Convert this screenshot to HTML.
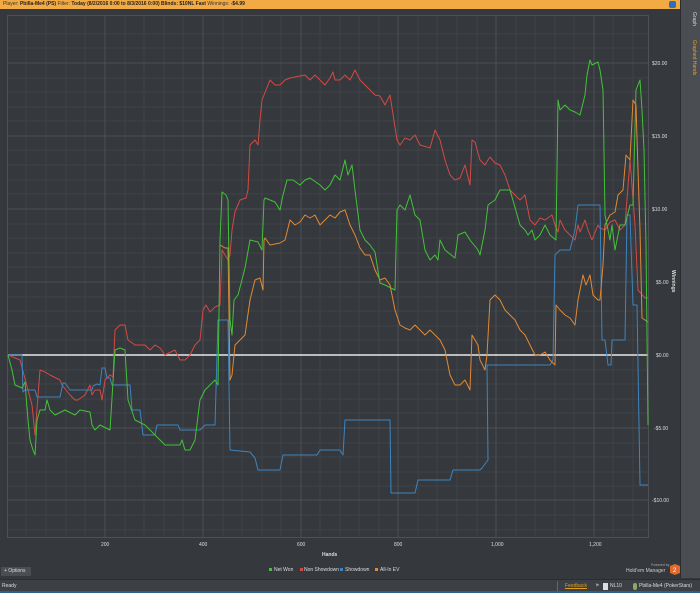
<!DOCTYPE html>
<html><head><meta charset="utf-8"><style>
*{margin:0;padding:0;box-sizing:border-box}
body{width:700px;height:593px;overflow:hidden;background:#35383c;font-family:"Liberation Sans",sans-serif;position:relative}
.top{position:absolute;left:0;top:0;width:680px;height:9px;background:#f2aa45;font-size:5px;line-height:9px;color:#333;padding-left:3px;white-space:nowrap}
.top b{color:#222}
.side{position:absolute;left:680px;top:0;width:20px;height:578px;background:#4a4d51;border-left:1px solid #2a2c2f}
.vt{position:absolute;transform:rotate(90deg);transform-origin:left top;font-size:5px;white-space:nowrap}
.status{position:absolute;left:0;top:579px;width:700px;height:14px;background:#3c3f43;border-top:1px solid #2b2d30;font-size:5px;color:#ddd;line-height:12px}
.opt{position:absolute;left:1px;top:567px;width:30px;height:9px;background:#4a4d51;font-size:5px;color:#ddd;line-height:9px;padding-left:3px}
</style></head><body>
<div class="top">Player: <b>Pbilla-Me4 (PS)</b> Filter: <b>Today (8/2/2016 0:00 to 8/3/2016 0:00) Blinds: $10NL Fast</b> Winnings: <b>-$4.99</b></div>
<div style="position:absolute;left:669px;top:1px;width:7px;height:7px;background:#2a6fc0;border-radius:2px"></div>
<div class="side"><div class="vt" style="left:16px;top:12px;color:#ddd">Graph</div><div class="vt" style="left:16px;top:40px;color:#f0a030">Graphed Hands</div></div>
<svg width="680" height="578" style="position:absolute;left:0;top:9px" viewBox="0 9 680 578">
<g stroke="#41454a" stroke-width="0.6">
<script></script>
</g>
<g id="g"></g>
<rect x="7.5" y="15.5" width="641" height="522" fill="none" stroke="#4d5156" stroke-width="1"/>
<g stroke="#484c51" stroke-width="0.5">
<path d="M26 16V537M46 16V537M66 16V537M85 16V537M125 16V537M144 16V537M164 16V537M183 16V537M223 16V537M242 16V537M262 16V537M281 16V537M320 16V537M340 16V537M359 16V537M379 16V537M418 16V537M437 16V537M457 16V537M477 16V537M516 16V537M535 16V537M555 16V537M574 16V537M613 16V537M633 16V537"/>
<path d="M8 34H648M8 48H648M8 78H648M8 92H648M8 107H648M8 121H648M8 150H648M8 165H648M8 180H648M8 194H648M8 224H648M8 238H648M8 253H648M8 267H648M8 297H648M8 311H648M8 326H648M8 340H648M8 370H648M8 384H648M8 399H648M8 413H648M8 443H648M8 457H648M8 472H648M8 486H648M8 515H648M8 530H648"/>
</g>
<g stroke="#53575c" stroke-width="0.8">
<path d="M105 16V537M203 16V537M301 16V537M398 16V537M496 16V537M594 16V537M8 63H648M8 136H648M8 209H648M8 282H648M8 428H648M8 500H648"/>
</g>
<line x1="8" y1="355" x2="648" y2="355" stroke="#e8e8e8" stroke-width="1.4"/>
<g fill="none" stroke-width="1" stroke-linejoin="round">
<polyline stroke="#d24a45" points="8,355 20,360 28,390 32,405 35,435 40,370 45,372 50,375 60,380 62,385 70,395 75,400 78,400 85,395 90,385 92,395 95,390 100,390 102,400 105,380 110,375 113,377 115,330 120,325 125,325 128,340 135,345 145,345 150,350 155,345 160,348 165,355 175,350 180,360 185,360 190,355 195,345 200,340 203,310 206,305 210,312 215,307 220,305 222,250 225,255 228,260 230,255 232,230 235,212 240,200 246,198 248,190 250,145 255,140 258,145 260,120 262,100 266,90 270,80 275,85 280,85 285,80 290,78 300,76 305,75 310,80 315,75 320,80 325,85 330,78 333,72 335,80 340,80 345,75 350,80 355,70 360,80 365,85 370,90 375,95 380,96 385,105 390,95 397,140 400,145 405,138 410,140 415,135 420,145 430,148 435,130 440,140 445,160 450,175 455,180 460,178 465,165 470,185 472,140 475,142 480,160 485,165 488,160 490,157 495,163 500,165 505,175 510,190 515,195 520,200 525,195 530,220 535,225 540,218 545,220 552,215 555,225 558,232 560,220 565,230 570,235 575,240 578,225 580,232 583,225 585,220 588,230 592,240 598,225 600,228 605,230 610,222 615,220 620,230 625,225 630,160 635,225 638,290 645,298 648,298"/>
<polyline stroke="#3d85c0" points="8,355 22,355 23,392 25,390 35,390 37,397 60,397 63,383 65,383 70,390 92,390 93,386 97,384 100,385 102,368 105,368 107,378 110,378 112,385 130,385 132,410 140,410 143,435 155,435 157,425 178,425 180,430 200,430 205,425 215,425 218,320 228,320 230,450 250,452 255,458 258,470 280,470 283,455 317,455 320,450 340,450 343,455 345,420 390,420 391,493 415,493 418,480 450,480 453,470 480,470 482,468 488,460 487,365 550,365 553,360 555,255 560,250 570,250 575,230 578,205 600,205 602,340 605,340 608,365 611,365 612,340 625,340 627,215 630,215 633,305 637,305 640,485 648,485"/>
<polyline stroke="#e08a35" points="220,245 225,248 228,248 230,380 232,375 235,345 240,340 245,335 250,300 255,280 260,278 263,290 264,240 265,238 270,245 280,243 285,240 290,220 295,225 300,222 305,215 310,218 315,215 320,225 325,220 330,215 335,218 340,212 345,210 350,225 355,235 360,248 365,255 370,255 375,270 380,280 385,278 390,285 395,310 400,325 405,328 410,330 415,325 425,335 430,330 435,335 440,340 445,350 448,365 450,375 455,385 460,385 465,380 470,390 472,335 478,345 480,360 485,370 487,355 490,300 495,295 500,300 505,310 510,315 515,320 520,330 525,335 530,345 535,355 540,355 545,352 550,360 555,365 556,305 560,310 565,315 570,318 575,325 578,300 583,275 586,285 590,275 593,295 598,300 600,300 603,265 605,225 610,215 615,212 618,195 623,190 626,155 630,160 633,100 636,105 638,170 640,230 642,318 648,322"/>
<polyline stroke="#44c23a" points="8,355 12,370 15,385 22,388 25,382 28,420 30,440 33,450 35,455 37,420 40,410 45,410 47,400 50,410 55,415 65,410 75,415 80,410 90,412 92,425 95,430 100,425 110,430 115,350 120,348 125,350 128,400 135,420 145,425 150,430 160,440 165,445 180,445 182,440 185,450 190,450 195,440 200,400 205,390 210,385 215,380 218,385 220,240 222,192 226,195 228,200 230,320 232,335 234,300 238,295 245,268 250,240 258,242 262,250 264,200 265,198 270,200 275,202 280,210 283,195 287,180 293,180 300,185 305,180 310,178 320,185 325,190 330,185 335,175 340,180 345,160 348,175 352,165 355,190 360,230 365,240 370,245 375,252 380,283 385,285 395,290 397,210 400,205 405,210 410,195 415,215 420,220 425,250 430,260 435,255 438,260 440,240 445,250 455,258 458,235 465,232 470,240 478,250 480,255 485,230 488,205 495,200 500,190 510,190 520,225 525,230 528,235 532,230 535,240 540,235 545,225 550,235 556,240 558,100 560,110 565,105 570,110 575,112 580,115 585,95 587,75 590,60 592,65 598,62 600,70 603,90 605,215 610,240 612,225 615,250 620,225 625,225 630,205 633,205 636,90 640,80 642,110 644,150 646,245 648,425"/>
</g>
<g font-size="5" fill="#ddd">
<text x="652" y="65">$20.00</text><text x="652" y="138">$15.00</text><text x="652" y="211">$10.00</text><text x="656" y="284">$5.00</text><text x="656" y="357">$0.00</text><text x="654" y="430">-$5.00</text><text x="652" y="502">-$10.00</text>
<text x="101" y="546">200</text><text x="199" y="546">400</text><text x="297" y="546">600</text><text x="394" y="546">800</text><text x="491" y="546">1,000</text><text x="589" y="546">1,200</text>
<text x="322" y="556" font-weight="bold">Hands</text>
<text x="672" y="270" font-weight="bold" transform="rotate(90 672 270)">Winnings</text>
<rect x="269" y="568" width="3" height="3" fill="#44c23a"/><text x="274" y="571">Net Won</text>
<rect x="300" y="568" width="3" height="3" fill="#d24a45"/><text x="304" y="571">Non Showdown</text>
<rect x="340" y="568" width="3" height="3" fill="#3d85c0"/><text x="345" y="571">Showdown</text>
<rect x="375" y="568" width="3" height="3" fill="#e08a35"/><text x="380" y="571">All-In EV</text>
<text x="651" y="566" font-size="3.5" fill="#aaa">Powered by</text>
<text x="626" y="572" fill="#ccc">Hold'em Manager</text>
</g>
<polygon points="675,564 680,566 680,573 675,575 670,573 670,566" fill="#e06a2a"/>
<text x="673" y="572" font-size="6" fill="#fff" font-family="Liberation Sans">2</text>
</svg>
<div class="opt">+ Options</div>
<div class="status"><span style="position:absolute;left:2px">Ready</span>
<span style="position:absolute;left:557px;top:1px;width:1px;height:11px;background:#666"></span>
<span style="position:absolute;left:565px;color:#e0a020;text-decoration:underline">Feedback</span>
<span style="position:absolute;left:595px;color:#999">⚑</span>
<span style="position:absolute;left:603px;top:3px;width:5px;height:7px;background:#ddd"></span>
<span style="position:absolute;left:610px">NL10</span>
<span style="position:absolute;left:633px;top:3px;width:4px;height:7px;background:#8a6;border-radius:2px"></span>
<span style="position:absolute;left:639px">Pbilla-Me4 (PokerStars)</span>
</div>
<div style="position:absolute;left:0;top:591px;width:700px;height:2px;background:#2c5f8a"></div>
</body></html>
